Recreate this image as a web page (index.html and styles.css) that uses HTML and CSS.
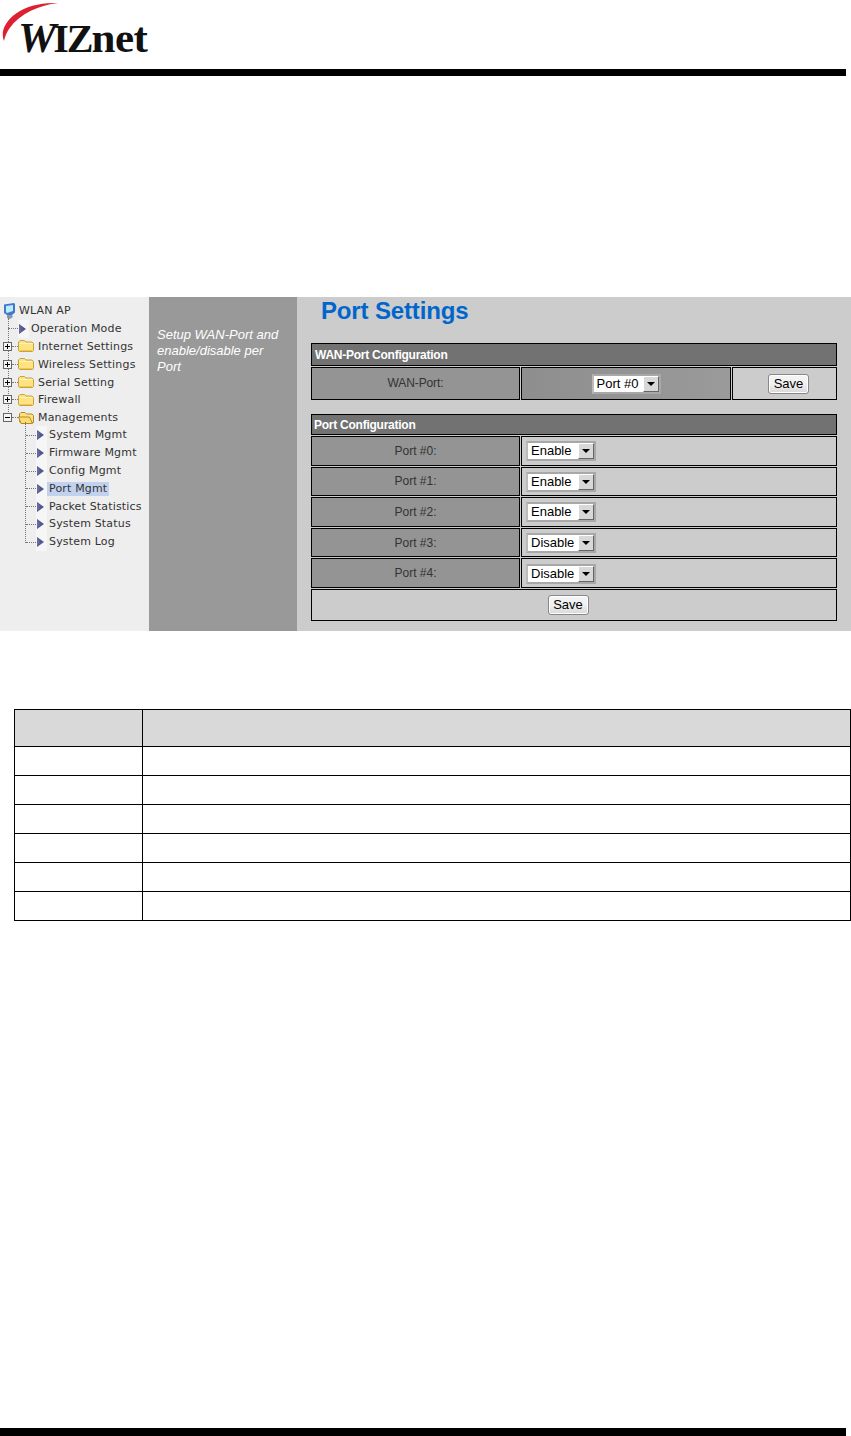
FILE: index.html
```html
<!DOCTYPE html>
<html lang="en">
<head>
<meta charset="utf-8">
<title>WIZnet Port Settings</title>
<link rel="stylesheet" href="styles.css">
</head>
<body>
<svg class="sprite" aria-hidden="true">
  <symbol id="arrow" viewBox="0 0 7 10"><path d="M0 0L7 5L0 10Z" fill="#55558f"/><path d="M0 1L2.500 3V7L0 9Z" fill="#6a6aa2"/></symbol>
  <symbol id="folder" viewBox="0 0 16 12"><path d="M.5 3V2L2 .5H6.500L8 2H14L15.500 3.500V10.500L14.500 11.500H1.500L.5 10.500Z" fill="#ffe383" stroke="#c8a23a"/><path d="M1.500 3.500H14.500" stroke="#fff3bd"/><path d="M1.500 10.500H14.500" stroke="#f0c64e"/></symbol>
  <symbol id="folder-open" viewBox="0 0 16 12"><path d="M1.500 8V2L3 .5H7L8.500 2H14L15.500 3.500V10.500H2Z" fill="#ffe383" stroke="#b08a28"/><path d="M.5 5H11.500L14.500 11.500H3Z" fill="#ffdc6e" stroke="#b08a28"/></symbol>
  <symbol id="plus" viewBox="0 0 9 9"><rect x=".5" y=".5" width="8" height="8" fill="#f4f4f4" stroke="#666"/><path d="M2 4.500H7M4.500 2V7" stroke="#000"/></symbol>
  <symbol id="minus" viewBox="0 0 9 9"><rect x=".5" y=".5" width="8" height="8" fill="#f4f4f4" stroke="#666"/><path d="M2 4.500H7" stroke="#000"/></symbol>
  <symbol id="monitor" viewBox="0 0 12 16"><path d="M1 1.500L11 0L12 1V9.500L9 12H4L1 10Z" fill="#3f78cf"/><path d="M3 3L10 2V8L4 10L3 9Z" fill="#bfeaf7"/><path d="M4 12H9L10 14L7 16L4 15Z" fill="#8d97a8"/></symbol>
</svg>

<div class="page">
  <header class="doc-head">
    <svg class="swoosh" viewBox="0 0 60 44" aria-hidden="true"><path d="M4 41C-3 24 20 1 58 3C40 5 20 13 9 29C7 32 5 36 4 41Z" fill="#dc2231"/></svg>
    <div class="logo"><span class="logo-w">W</span><span class="logo-iz">IZ</span><span class="logo-net">net</span></div>
  </header>
  <div class="rule"></div>

  <section class="shot">
    <nav class="tree">
      <div class="row root"><svg class="ico-monitor"><use href="#monitor"/></svg><span class="lbl">WLAN AP</span></div>
      <div class="row leaf"><i class="dash"></i><svg class="ico-arrow"><use href="#arrow"/></svg><span class="lbl">Operation Mode</span></div>
      <div class="row fold"><svg class="ico-box"><use href="#plus"/></svg><i class="dash"></i><svg class="ico-folder"><use href="#folder"/></svg><span class="lbl">Internet Settings</span></div>
      <div class="row fold"><svg class="ico-box"><use href="#plus"/></svg><i class="dash"></i><svg class="ico-folder"><use href="#folder"/></svg><span class="lbl">Wireless Settings</span></div>
      <div class="row fold"><svg class="ico-box"><use href="#plus"/></svg><i class="dash"></i><svg class="ico-folder"><use href="#folder"/></svg><span class="lbl">Serial Setting</span></div>
      <div class="row fold"><svg class="ico-box"><use href="#plus"/></svg><i class="dash"></i><svg class="ico-folder"><use href="#folder"/></svg><span class="lbl">Firewall</span></div>
      <div class="row fold"><svg class="ico-box"><use href="#minus"/></svg><i class="dash"></i><svg class="ico-folder"><use href="#folder-open"/></svg><span class="lbl">Managements</span></div>
      <div class="sub">
        <div class="row item"><i class="dash"></i><svg class="ico-arrow"><use href="#arrow"/></svg><span class="lbl">System Mgmt</span></div>
        <div class="row item"><i class="dash"></i><svg class="ico-arrow"><use href="#arrow"/></svg><span class="lbl">Firmware Mgmt</span></div>
        <div class="row item"><i class="dash"></i><svg class="ico-arrow"><use href="#arrow"/></svg><span class="lbl">Config Mgmt</span></div>
        <div class="row item"><i class="dash"></i><svg class="ico-arrow"><use href="#arrow"/></svg><span class="lbl current">Port Mgmt</span></div>
        <div class="row item"><i class="dash"></i><svg class="ico-arrow"><use href="#arrow"/></svg><span class="lbl">Packet Statistics</span></div>
        <div class="row item"><i class="dash"></i><svg class="ico-arrow"><use href="#arrow"/></svg><span class="lbl">System Status</span></div>
        <div class="row item"><i class="dash"></i><svg class="ico-arrow"><use href="#arrow"/></svg><span class="lbl">System Log</span></div>
      </div>
    </nav>

    <aside class="hint"><p>Setup WAN-Port and enable/disable per Port</p></aside>

    <main class="main">
      <h1>Port Settings</h1>

      <div class="form wan">
        <div class="bar">WAN-Port Configuration</div>
        <div class="line line-wan">
          <div class="cell label">WAN-Port:</div>
          <div class="cell dark center"><span class="pick pick-port"><select><option>Port #0</option></select><b class="drop"></b></span></div>
          <div class="cell center save-wan"><button type="button">Save</button></div>
        </div>
      </div>

      <div class="form ports">
        <div class="bar bar-thin">Port Configuration</div>
        <div class="line"><div class="cell label">Port #0:</div><div class="cell field"><span class="pick"><select><option>Enable</option></select><b class="drop"></b></span></div></div>
        <div class="line"><div class="cell label">Port #1:</div><div class="cell field"><span class="pick"><select><option>Enable</option></select><b class="drop"></b></span></div></div>
        <div class="line"><div class="cell label">Port #2:</div><div class="cell field"><span class="pick"><select><option>Enable</option></select><b class="drop"></b></span></div></div>
        <div class="line"><div class="cell label">Port #3:</div><div class="cell field"><span class="pick"><select><option>Disable</option></select><b class="drop"></b></span></div></div>
        <div class="line"><div class="cell label">Port #4:</div><div class="cell field"><span class="pick"><select><option>Disable</option></select><b class="drop"></b></span></div></div>
        <div class="line line-save"><div class="cell center wide"><button type="button">Save</button></div></div>
      </div>
    </main>
  </section>

  <table class="blank">
    <colgroup><col class="col-a"><col></colgroup>
    <tr class="head"><td></td><td></td></tr>
    <tr><td></td><td></td></tr>
    <tr><td></td><td></td></tr>
    <tr><td></td><td></td></tr>
    <tr><td></td><td></td></tr>
    <tr><td></td><td></td></tr>
    <tr><td></td><td></td></tr>
  </table>

  <div class="rule rule-foot"></div>
</div>
</body>
</html>
```

FILE: styles.css
```css
* { box-sizing: border-box; }
html, body { margin: 0; padding: 0; background: #fff; }
body { font-family: "Liberation Sans", Arial, sans-serif; }
.sprite { position: absolute; width: 0; height: 0; }

.page { width: 851px; height: 1436px; display: flex; flex-direction: column; overflow: hidden; }

/* document header */
.doc-head { position: relative; height: 69px; padding: 18px 0 0 18px; }
.swoosh { position: absolute; left: 0; top: 0; width: 60px; height: 44px; }
.logo { position: relative; display: flex; align-items: baseline; height: 40px; line-height: 40px; font-family: "Liberation Serif", serif; font-weight: bold; color: #111; }
.logo-w { font-size: 43px; font-style: italic; letter-spacing: -3px; }
.logo-iz { font-size: 40px; letter-spacing: -2px; }
.logo-net { font-size: 43px; letter-spacing: -.5px; }
.rule { width: 846px; height: 7px; background: #000; flex: none; }
.rule-foot { height: 8px; margin-top: auto; }

/* embedded screenshot */
.shot { display: flex; height: 334px; margin-top: 221px; flex: none; }

.tree { position: relative; width: 149px; padding-top: 5px; background: #eeeeee; font-family: "DejaVu Sans", Verdana, sans-serif; font-size: 11px; letter-spacing: .17px; color: #333; }
.tree::before { content: ""; position: absolute; left: 8px; top: 21px; height: 100px; border-left: 1px dotted #777; }
.row { display: flex; align-items: center; height: 17.800px; white-space: nowrap; }
.dash { display: block; height: 0; border-top: 1px dotted #777; flex: none; }
.lbl { display: block; }

.ico-monitor { width: 12px; height: 16px; margin: 0 4px 0 3px; flex: none; }
.ico-arrow { box-sizing: content-box; width: 7px; height: 10px; padding: 4px 3px 4px 1px; background: #f6f6f6; flex: none; }
.ico-box { width: 9px; height: 9px; margin-left: 3px; flex: none; position: relative; }
.ico-folder { width: 16px; height: 12px; margin-right: 4px; flex: none; }

.leaf { padding-left: 8px; }
.leaf .dash { width: 10px; }
.leaf .ico-arrow { margin-right: 2px; }
.fold .dash { width: 6px; }

.sub { position: relative; }
.sub::before { content: ""; position: absolute; left: 25px; top: -5px; height: 121px; border-left: 1px dotted #777; }
.item { padding-left: 26px; }
.item .dash { width: 10px; }
.item .lbl { padding: 0 2px; height: 14px; line-height: 14px; }
.current { background: #c2d2ee; }

.hint { width: 148px; padding: 30px 8px 0; background: #999; color: #fff; font-size: 13px; font-style: italic; line-height: 16px; }
.hint p { margin: 0; }

.main { width: 554px; padding-left: 14px; background: #ccc; }
.main h1 { margin: 0 0 18px 10px; height: 28px; font-size: 24px; line-height: 28px; font-weight: bold; letter-spacing: -.15px; color: #0066cc; }

.form { width: 526px; display: flex; flex-direction: column; gap: 1px; font-size: 12px; }
.wan { margin-bottom: 14px; }
.bar { height: 23px; padding-left: 3px; border: 1px solid #000; background: #727272; color: #fff; font-weight: bold; line-height: 23px; letter-spacing: -.25px; }
.bar-thin { height: 21px; padding-left: 2px; line-height: 21px; }
.line { display: flex; gap: 1px; height: 29.600px; }
.line-wan { height: 33px; }
.line-save { height: 32px; }
.cell { display: flex; align-items: center; border: 1px solid #000; }
.cell:nth-child(1) { width: 209px; flex: none; }
.cell:nth-child(2) { flex: 1; }
.line-wan .cell:nth-child(2) { width: 210px; flex: none; }
.line-wan .cell:nth-child(3) { flex: 1; }
.cell.wide { width: 100%; padding-right: 12px; }
.save-wan { padding-left: 8px; }
.label { justify-content: center; background: #949494; color: #333; }
.line-wan .label { padding-bottom: 1px; letter-spacing: -.1px; }
.dark { background: linear-gradient(90deg, #8e8e8e, #9a9a9a); }
.center { justify-content: center; }
.field { padding: 1px 0 0 4px; }

/* select box */
.pick { position: relative; display: inline-flex; width: 70px; height: 20px; border: 2px solid #a8a8a8; border-left-color: #bbb; background: #fff; }
.pick-port { width: 69px; }
.pick select { appearance: none; -webkit-appearance: none; width: 51px; height: 16px; padding: 0 0 0 3px; border: 0; outline: 0; border-radius: 0; background: #fff; color: #000; font: 13px/16px "Liberation Sans", Arial, sans-serif; }
.drop { position: absolute; right: 0; top: 0; width: 16px; height: 16px; border: 1px solid #777; border-color: #fff #666 #666 #fff; background: #d8d8d8; }
.drop::after { content: ""; position: absolute; left: 3px; top: 5px; border-style: solid; border-width: 4px 4px 0; border-color: #000 transparent transparent; }

button { width: 41px; height: 20px; padding: 0; border: 1px solid #888; border-radius: 3px; background: linear-gradient(#f4f4f4, #f0f0f0 50%, #d8d8d8); box-shadow: inset 0 0 0 1px #fff; color: #000; font: 13px "Liberation Sans", Arial, sans-serif; }

/* blank parameter table */
.blank { width: 837px; margin: 78px 0 0 14px; border-collapse: collapse; table-layout: fixed; flex: none; }
.blank td { height: 29px; padding: 0; border: 1px solid #000; }
.blank .head td { height: 37px; background: #d9d9d9; }
.col-a { width: 128px; }
```
